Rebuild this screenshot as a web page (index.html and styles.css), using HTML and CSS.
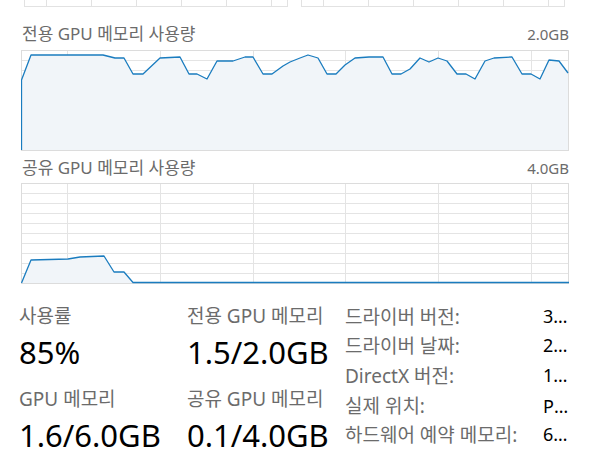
FILE: index.html
```html
<!DOCTYPE html>
<html lang="ko">
<head>
    <meta charset="UTF-8">
    <meta name="viewport" content="width=device-width, initial-scale=1.0">
    <title>GPU 성능</title>
    <link rel="stylesheet" href="styles.css">
</head>
<body>
    <div class="panel">
        <div class="engines">
            <div class="engine-box"></div>
            <div class="engine-box"></div>
        </div>

        <div class="graph-head first">
            <span class="graph-title">전용 GPU 메모리 사용량</span>
            <span class="graph-max">2.0GB</span>
        </div>
        <svg class="graph" width="548" height="101" viewBox="0 0 548 101">
            <g class="grid">
                <path d="M0 10.5H548M0 20.5H548M0 30.5H548M0 40.5H548M0 50.5H548M0 60.5H548M0 70.5H548M0 80.5H548M0 90.5H548"/>
                <path d="M46.5 0V101M139.5 0V101M232.5 0V101M324.5 0V101M417.5 0V101M510.5 0V101"/>
            </g>
            <polygon class="area" points="0,30 10,5 82,5 94,8 103,8 112,24 122,24 139,8 159,7 168,24 176,24 186,29 196,11 212,11 224,7 232,7 242,24 251,24 262,16 269,12 279,8 287,5 297,8 306,24 315,24 324,15 334,8 348,7 362,7 371,24 380,24 389,19 399,8 408,12 417,8 426,11 436,24 445,24 454,29 464,11 473,8 491,7 501,24 510,24 519,29 528,10 538,11 547,23 547,100 0,100"/>
            <rect class="frame" x="0.5" y="0.5" width="547" height="100"/>
            <polyline class="line" points="0.5,100 0.5,30 10,5 82,5 94,8 103,8 112,24 122,24 139,8 159,7 168,24 176,24 186,29 196,11 212,11 224,7 232,7 242,24 251,24 262,16 269,12 279,8 287,5 297,8 306,24 315,24 324,15 334,8 348,7 362,7 371,24 380,24 389,19 399,8 408,12 417,8 426,11 436,24 445,24 454,29 464,11 473,8 491,7 501,24 510,24 519,29 528,10 538,11 547,23"/>
        </svg>

        <div class="graph-head">
            <span class="graph-title">공유 GPU 메모리 사용량</span>
            <span class="graph-max">4.0GB</span>
        </div>
        <svg class="graph" width="548" height="101" viewBox="0 0 548 101">
            <g class="grid">
                <path d="M0 10.5H548M0 20.5H548M0 30.5H548M0 40.5H548M0 50.5H548M0 60.5H548M0 70.5H548M0 80.5H548M0 90.5H548"/>
                <path d="M46.5 0V101M139.5 0V101M232.5 0V101M324.5 0V101M417.5 0V101M510.5 0V101"/>
            </g>
            <polygon class="area" points="0,100 10,77 47,76 59,74 83,73 93,89 103,89 112,99.5 547,99.5 547,100"/>
            <rect class="frame" x="0.5" y="0.5" width="547" height="100"/>
            <polyline class="line" points="0.5,100 10,77 47,76 59,74 83,73 93,89 103,89 112,99.5 548,99.5"/>
        </svg>

        <div class="stats">
            <div class="stat-col">
                <div class="stat-label">사용률</div>
                <div class="stat-value">85%</div>
                <div class="stat-label next">GPU 메모리</div>
                <div class="stat-value">1.6/6.0GB</div>
            </div>
            <div class="stat-col">
                <div class="stat-label">전용 GPU 메모리</div>
                <div class="stat-value">1.5/2.0GB</div>
                <div class="stat-label next">공유 GPU 메모리</div>
                <div class="stat-value">0.1/4.0GB</div>
            </div>
            <div class="info">
                <div class="info-key">드라이버 버전:</div>
                <div class="info-val">31.0.101.4502</div>
                <div class="info-key">드라이버 날짜:</div>
                <div class="info-val">2023-06-12</div>
                <div class="info-key">DirectX 버전:</div>
                <div class="info-val">12 (FL 12.1)</div>
                <div class="info-key">실제 위치:</div>
                <div class="info-val">PCI 버스 0, 장치 2, 기능 0</div>
                <div class="info-key">하드웨어 예약 메모리:</div>
                <div class="info-val">64.0MB</div>
            </div>
        </div>
    </div>
</body>
</html>
```

FILE: styles.css
```css
body {
    margin: 0;
    background: #fff;
    font-family: "Noto Sans", "Noto Sans CJK KR", sans-serif;
    overflow: hidden;
}
.panel {
    width: 548px;
    padding: 0 0 0 21px;
}

/* cut-off engine graphs above */
.engines {
    display: flex;
    gap: 13px;
    margin-left: 3px;
}
.engine-box {
    width: 262px;
    height: 6px;
    border: 1px solid #e2e2e2;
    border-top: none;
    background: repeating-linear-gradient(90deg, transparent 0 21px, #e2e2e2 21px 22px, transparent 22px 45px);
}

.graph-head {
    display: flex;
    justify-content: space-between;
    align-items: baseline;
    line-height: 20px;
    color: #6b6b6b;
    margin: 7px 0 5px 1px;
}
.graph-head.first { margin-top: 17px; margin-bottom: 6px; }
.graph-title { font-size: 17px; }
.graph-max { font-size: 15px; }
.graph { display: block; }
.grid path { stroke: #e4e4e4; stroke-width: 1; fill: none; }
.frame { fill: none; stroke: #dcdcdc; stroke-width: 1; }
.area { fill: #f1f5f9; }
.line { fill: none; stroke: #1a7cbf; stroke-width: 1.3; stroke-linejoin: round; }

.stats {
    display: flex;
    margin: 20px 0 0 -2px;
}
.stat-col { width: 169px; }
.stat-col + .stat-col { width: 159px; }
.stat-label {
    font-size: 19px;
    line-height: 24px;
    color: #6b6b6b;
    white-space: nowrap;
}
.stat-label.next { margin-top: 15px; }
.stat-value {
    font-size: 31px;
    line-height: 40px;
    margin-top: 4px;
    color: #000;
}
.info {
    display: grid;
    grid-template-columns: 198px 26px;
    grid-auto-rows: 29.6px;
    align-items: center;
    font-size: 19px;
    margin-top: -3px;
}
.info-key { color: #6b6b6b; white-space: nowrap; }
.info-val {
    color: #000;
    font-size: 18px;
    white-space: nowrap;
    overflow: hidden;
    text-overflow: ellipsis;
}
```
